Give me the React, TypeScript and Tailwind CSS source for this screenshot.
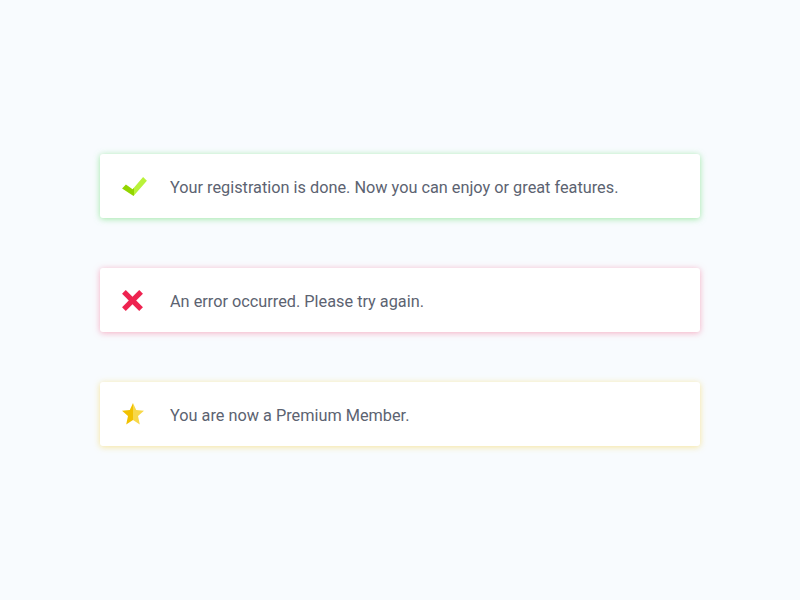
import type { ReactNode } from 'react';

const CheckIcon = () => (
  <svg width="25" height="21" viewBox="0 0 26 22">
    <defs>
      <linearGradient id="chk" x1="0" x2="1" y1="0" y2="0">
        <stop offset="0.48" stopColor="#93d500" />
        <stop offset="0.48" stopColor="#b9f23a" />
      </linearGradient>
    </defs>
    <polygon points="0,13 4,9 11,14 22,1 26,5 12,21" fill="url(#chk)" />
  </svg>
);

const CrossIcon = () => (
  <svg width="21" height="21" viewBox="0 0 22 22">
    <g stroke="#ee2350" strokeWidth="5.5" strokeLinecap="butt">
      <line x1="2" y1="2" x2="20" y2="20" />
      <line x1="20" y1="2" x2="2" y2="20" />
    </g>
  </svg>
);

const StarIcon = () => (
  <svg width="22" height="22" viewBox="0 0 22 22">
    <defs>
      <linearGradient id="star" x1="0" x2="1" y1="0" y2="0">
        <stop offset="0.5" stopColor="#f1c100" />
        <stop offset="0.5" stopColor="#f7d849" />
      </linearGradient>
    </defs>
    <polygon
      points="11,0 14.2,7 22,7.8 16,13 17.8,21.5 11,17 4.2,21.5 6,13 0,7.8 7.8,7"
      fill="url(#star)"
    />
  </svg>
);

type NoticeProps = {
  icon: ReactNode;
  text: string;
  glow: string;
};

const Notice = ({ icon, text, glow }: NoticeProps) => (
  <div className={`flex h-16 w-[600px] items-center rounded-[3px] bg-white pl-[22px] ${glow}`}>
    <div className="flex w-[26px] items-center">{icon}</div>
    <p className="ml-[22px] pt-[4px] text-[16.3px] text-[#5c6371]">{text}</p>
  </div>
);

export default function App() {
  return (
    <div
      className="flex h-screen w-full flex-col items-center justify-center gap-[50px] bg-[#f8fbfe]"
      style={{ fontFamily: 'Roboto, "Liberation Sans", sans-serif' }}
    >
      <Notice
        icon={<CheckIcon />}
        text="Your registration is done. Now you can enjoy or great features."
        glow="shadow-[0_1px_6px_rgba(120,225,130,0.7)]"
      />
      <Notice
        icon={<CrossIcon />}
        text="An error occurred. Please try again."
        glow="shadow-[0_1px_6px_rgba(245,140,170,0.7)]"
      />
      <Notice
        icon={<StarIcon />}
        text="You are now a Premium Member."
        glow="shadow-[0_1px_6px_rgba(245,220,120,0.75)]"
      />
    </div>
  );
}
